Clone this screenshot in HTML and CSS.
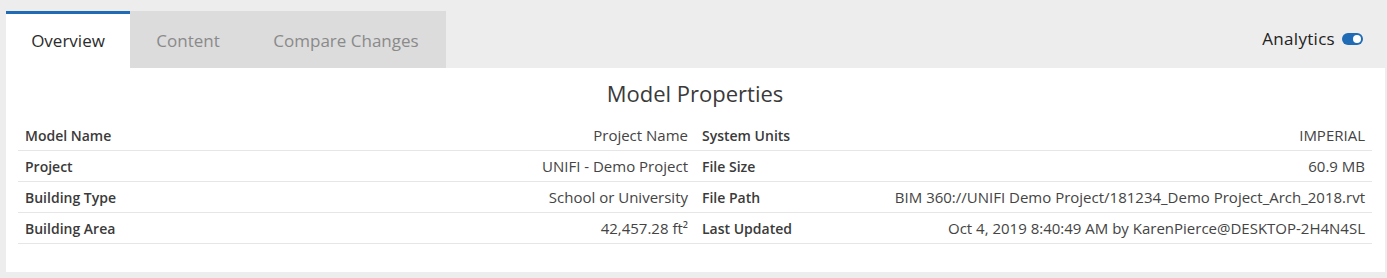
FILE: index.html
```html
<!DOCTYPE html>
<html lang="en">
<head>
    <meta charset="UTF-8">
    <title>Model Overview</title>
    <link rel="stylesheet" href="styles.css">
</head>
<body>
    <div class="page">
        <div class="topbar">
            <ul class="tabs">
                <li class="tab tab-overview active">Overview</li>
                <li class="tab tab-content">Content</li>
                <li class="tab tab-compare">Compare Changes</li>
            </ul>
            <div class="analytics">
                <span>Analytics</span>
                <span class="toggle on"><span class="knob"></span></span>
            </div>
        </div>

        <div class="panel">
            <h2>Model Properties</h2>
            <table class="props">
                <tr>
                    <td class="label">Model Name</td>
                    <td class="value">Project Name</td>
                    <td class="label">System Units</td>
                    <td class="value">IMPERIAL</td>
                </tr>
                <tr>
                    <td class="label">Project</td>
                    <td class="value">UNIFI - Demo Project</td>
                    <td class="label">File Size</td>
                    <td class="value">60.9 MB</td>
                </tr>
                <tr>
                    <td class="label">Building Type</td>
                    <td class="value">School or University</td>
                    <td class="label">File Path</td>
                    <td class="value">BIM 360://UNIFI Demo Project/181234_Demo Project_Arch_2018.rvt</td>
                </tr>
                <tr>
                    <td class="label">Building Area</td>
                    <td class="value">42,457.28 ft²</td>
                    <td class="label">Last Updated</td>
                    <td class="value">Oct 4, 2019 8:40:49 AM by KarenPierce@DESKTOP-2H4N4SL</td>
                </tr>
            </table>
        </div>
    </div>
</body>
</html>
```

FILE: styles.css
```css
body {
    margin: 0;
    background-color: #ededed;
    font-family: "Open Sans", Arial, sans-serif;
    color: #333;
}

.page {
    padding: 11px 2px 6px 6px;
}

.topbar {
    display: flex;
    justify-content: space-between;
    align-items: flex-start;
}

.tabs {
    list-style: none;
    margin: 0;
    padding: 0;
    display: flex;
    background: #dcdcdc;
}

.tab {
    height: 54px;
    line-height: 54px;
    text-align: center;
    font-size: 17px;
    color: #8a8a8a;
    border-top: 3px solid transparent;
}

.tab-overview { width: 124px; }
.tab-content { width: 116px; }
.tab-compare { width: 200px; }

.tab.active {
    background: white;
    color: #2b2b2b;
    border-top-color: #1f6bb5;
}

.analytics {
    display: flex;
    align-items: center;
    gap: 7px;
    margin-top: 16px;
    margin-right: 22px;
    font-size: 17px;
    letter-spacing: 0.3px;
    color: #222;
}

.toggle {
    width: 21px;
    height: 12px;
    border-radius: 6px;
    background: #1f6bb5;
    display: flex;
    align-items: center;
    justify-content: flex-end;
    padding: 0 2px;
    box-sizing: border-box;
}

.toggle .knob {
    width: 8px;
    height: 8px;
    border-radius: 50%;
    background: white;
}

.panel {
    background: white;
    padding: 9px 13px 28px 12px;
}

.panel h2 {
    margin: 0 0 11px;
    text-align: center;
    font-size: 22px;
    font-weight: normal;
    color: #3a3a3a;
    line-height: 32px;
}

.props {
    width: 100%;
    border-collapse: collapse;
    font-size: 14px;
    table-layout: fixed;
}

.props td {
    height: 30px;
    padding: 0 7px;
    border-bottom: 1px solid #e6e6e6;
    white-space: nowrap;
}

.props .label {
    font-weight: 600;
    color: #3a3a3a;
    width: 150px;
}

.props .value {
    text-align: right;
    font-size: 15px;
    color: #444;
}
```
